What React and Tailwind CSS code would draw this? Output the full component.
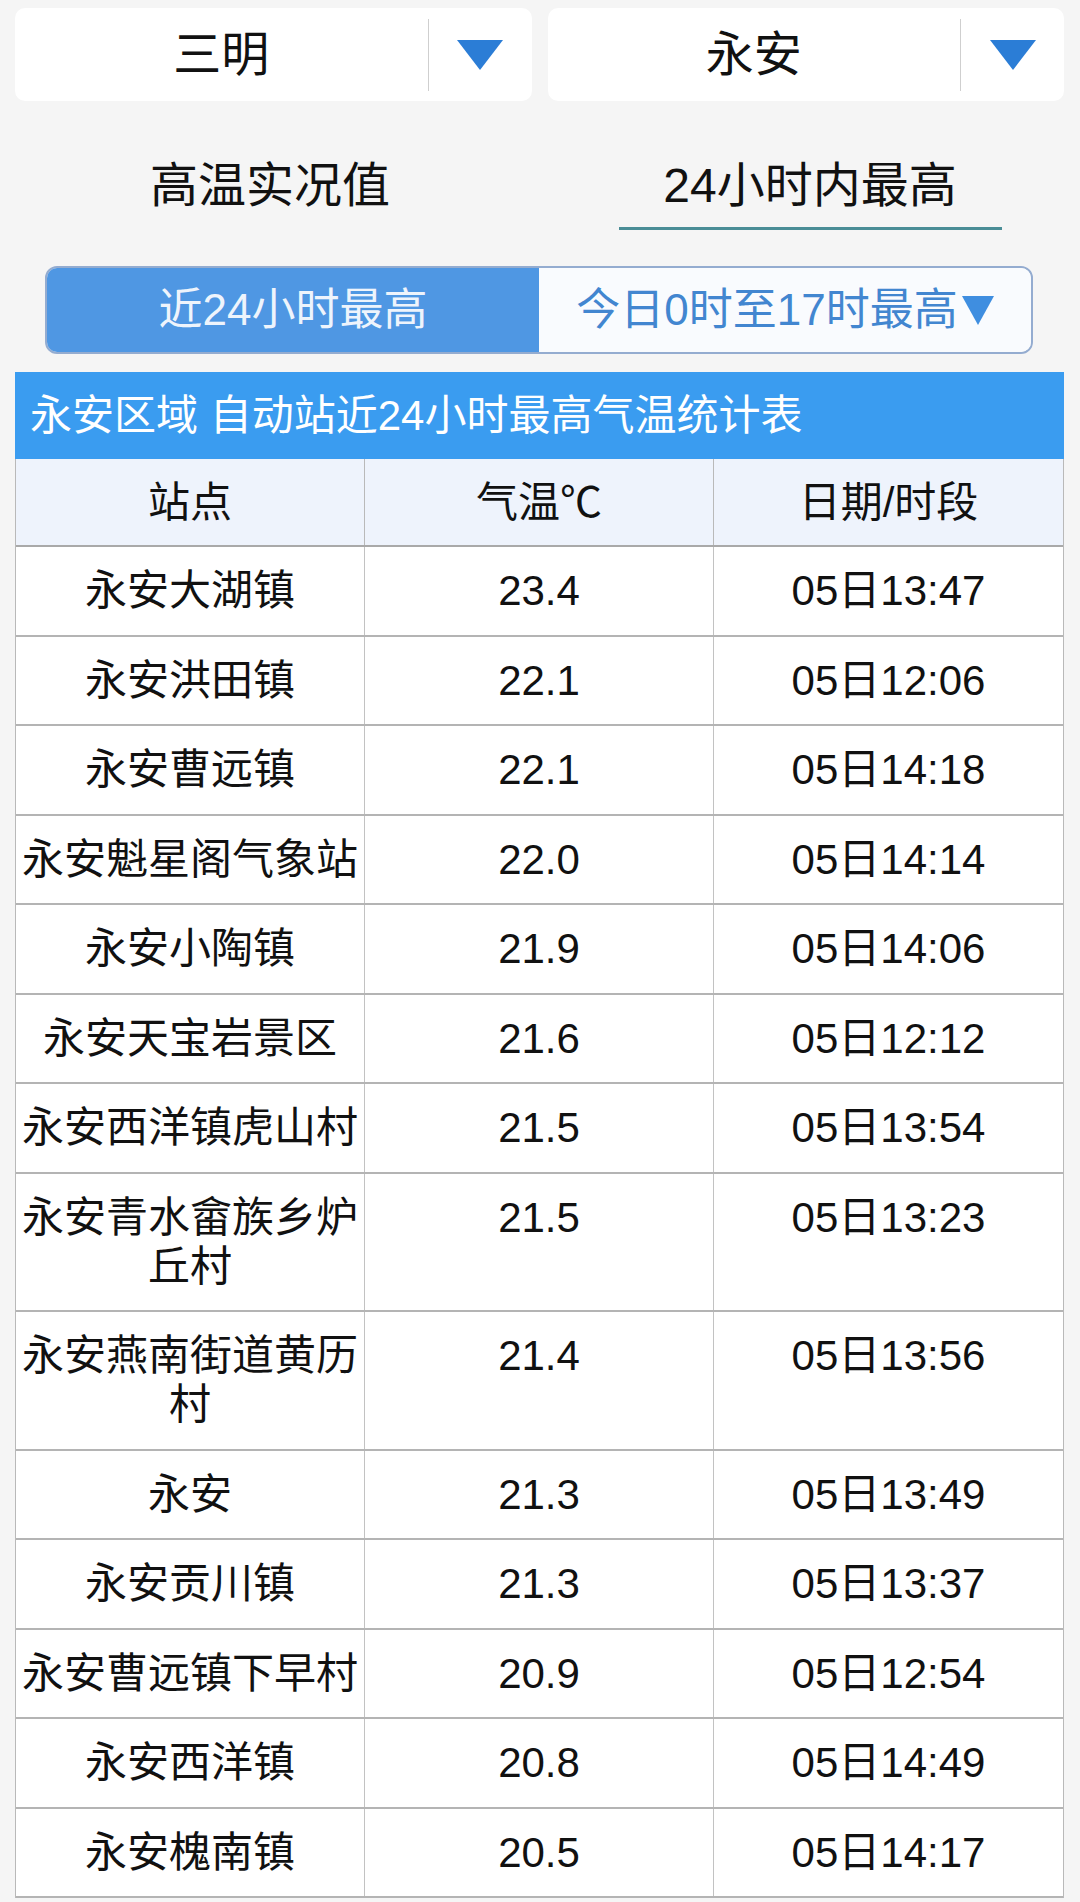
import React from 'react'

const rows = [
  ['永安大湖镇', '23.4', '05日13:47'],
  ['永安洪田镇', '22.1', '05日12:06'],
  ['永安曹远镇', '22.1', '05日14:18'],
  ['永安魁星阁气象站', '22.0', '05日14:14'],
  ['永安小陶镇', '21.9', '05日14:06'],
  ['永安天宝岩景区', '21.6', '05日12:12'],
  ['永安西洋镇虎山村', '21.5', '05日13:54'],
  ['永安青水畲族乡炉丘村', '21.5', '05日13:23'],
  ['永安燕南街道黄历村', '21.4', '05日13:56'],
  ['永安', '21.3', '05日13:49'],
  ['永安贡川镇', '21.3', '05日13:37'],
  ['永安曹远镇下早村', '20.9', '05日12:54'],
  ['永安西洋镇', '20.8', '05日14:49'],
  ['永安槐南镇', '20.5', '05日14:17'],
]

function Caret({ w = 46, h = 30, color = '#2b7dd6' }) {
  return (
    <svg width={w} height={h} viewBox={`0 0 ${w} ${h}`}>
      <polygon points={`0,0 ${w},0 ${w / 2},${h}`} fill={color} />
    </svg>
  )
}

function Picker({ label }) {
  return (
    <div className="flex-1 h-[93px] bg-white rounded-[10px] flex items-center">
      <div className="flex-1 text-center text-[48px] leading-[56px] text-[#111]">{label}</div>
      <div className="w-px h-[72px] bg-[#cfcfcf]" />
      <div className="w-[103px] flex justify-center">
        <Caret />
      </div>
    </div>
  )
}

export default function App() {
  return (
    <div className="min-h-screen bg-[#f5f5f5] font-['Liberation_Sans','Noto_Sans_CJK_SC',sans-serif] pb-10">
      {/* city / county pickers */}
      <div className="flex gap-[16px] pl-[15px] pr-[16px] pt-[8px]">
        <Picker label="三明" />
        <Picker label="永安" />
      </div>

      {/* tabs */}
      <div className="grid grid-cols-2 mt-[57px]">
        <div className="flex flex-col items-center">
          <div className="text-[48px] leading-[56px] text-[#111]">高温实况值</div>
        </div>
        <div className="flex flex-col items-center">
          <div className="text-[48px] leading-[56px] text-[#111]">24小时内最高</div>
          <div className="w-[383px] h-[3px] bg-[#4a8d96] mt-[13px]" />
        </div>
      </div>

      {/* segmented switch */}
      <div className="ml-[45px] mr-[47px] mt-[36px] h-[88px] flex rounded-[12px] overflow-hidden border-2 border-[#94acd0]">
        <div className="flex-1 bg-[#4f97e3] flex items-center justify-center text-[44px] leading-[52px] text-[#eef4fc]">
          近24小时最高
        </div>
        <div className="flex-1 bg-[#f9fbfe] flex items-center justify-center text-[44px] leading-[52px] text-[#4286d0]">
          今日0时至17时最高
          <span className="ml-[4px] flex">
            <Caret w={32} h={29} color="#3f8ee0" />
          </span>
        </div>
      </div>

      {/* table */}
      <div className="ml-[15px] mr-[16px] mt-[18px]">
        <div className="h-[87px] bg-[#3a9cf0] flex items-center pl-[15px] text-[42px] leading-[50px] text-white whitespace-nowrap">
          永安区域 自动站近24小时最高气温统计表
        </div>
        <div className="border-x border-[#b9b9b9]">
          <div className="grid grid-cols-3 h-[88px] bg-[#eef3fc] border-b-2 border-[#a9a9a9] text-[42px] text-[#111]">
            <div className="flex items-center justify-center border-r border-[#b9b9b9]">站点</div>
            <div className="flex items-center justify-center border-r border-[#b9b9b9]">气温℃</div>
            <div className="flex items-center justify-center">日期/时段</div>
          </div>
          {rows.map(([name, temp, time], i) => (
            <div key={i} className="grid grid-cols-3 bg-white border-b-2 border-[#b4b4b4] text-[42px] leading-[49px] text-[#111]">
              <div className="px-[4px] py-[19.25px] text-center border-r border-[#c2c2c2]">{name}</div>
              <div className="py-[19.25px] text-center border-r border-[#c2c2c2]">{temp}</div>
              <div className="py-[19.25px] text-center">{time}</div>
            </div>
          ))}
        </div>
      </div>
    </div>
  )
}
